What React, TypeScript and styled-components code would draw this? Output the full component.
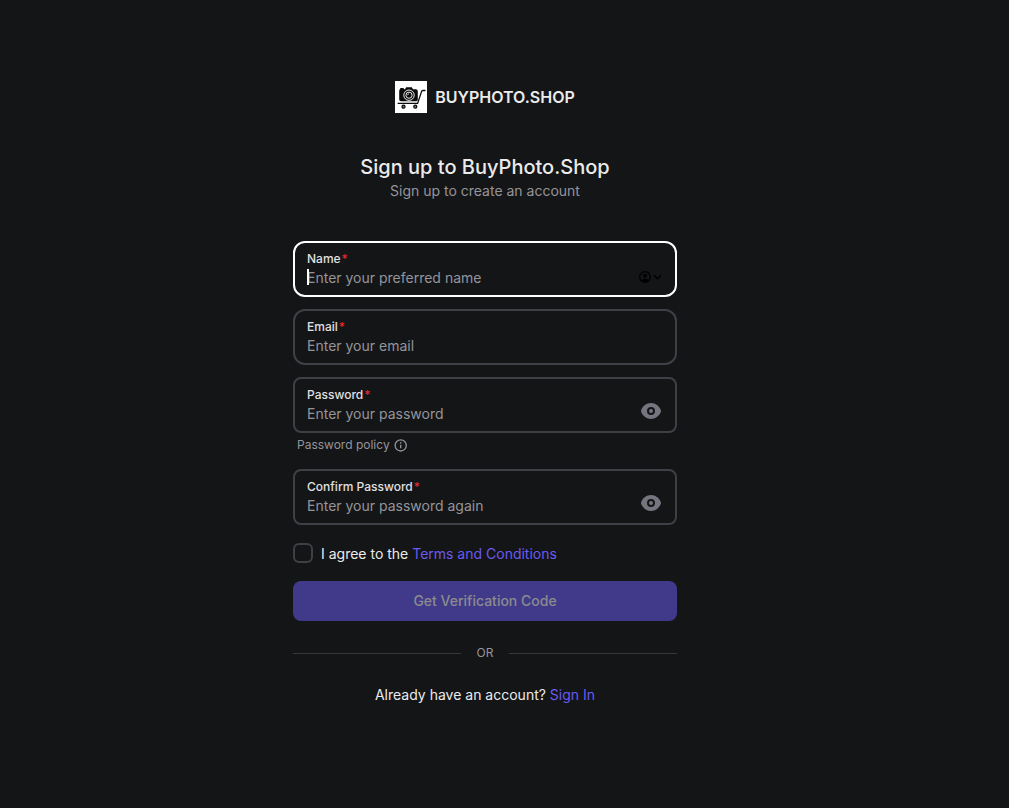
import React from "react";
import styled, { createGlobalStyle } from "styled-components";

const GlobalStyle = createGlobalStyle`
  *, *::before, *::after { box-sizing: border-box; }
  body {
    margin: 0;
    background: #141517;
    color: #ebebeb;
    font-family: Inter, "Liberation Sans", sans-serif;
    font-size: 14px;
    line-height: 20px;
  }
`;

const Page = styled.main`
  min-height: 100vh;
  display: flex;
  justify-content: center;
  padding: 81px 39px 80px 0;
`;

const Panel = styled.div`
  width: 100%;
  max-width: 384px;
  display: flex;
  flex-direction: column;
`;

const Brand = styled.div`
  display: flex;
  align-items: center;
  justify-content: center;
  gap: 8px;
  font-size: 16px;
  font-weight: 600;
`;

const Heading = styled.header`
  margin: 40px 0;
  text-align: center;
`;

const Title = styled.h1`
  margin: 0;
  font-size: 20px;
  line-height: 28px;
  font-weight: 500;
`;

const Subtitle = styled.p`
  margin: 0;
  color: #94949b;
`;

const Form = styled.form`
  display: flex;
  flex-direction: column;
`;

const Fields = styled.div`
  display: flex;
  flex-direction: column;
  gap: 12px;
`;

const FieldBox = styled.div<{ $active?: boolean; $radius: number }>`
  display: flex;
  align-items: flex-start;
  height: 56px;
  padding: 6px 12px;
  border: 2px solid ${(p) => (p.$active ? "#ffffff" : "#3f4046")};
  border-radius: ${(p) => p.$radius}px;
`;

const FieldText = styled.div`
  position: relative;
  flex: 1;
  min-width: 0;
`;

const Label = styled.label`
  display: block;
  font-size: 12px;
  line-height: 20px;
  font-weight: 500;
  color: #e0e0e2;
`;

const Star = styled.span`
  margin-left: 1px;
  color: #e5262d;
`;

const Input = styled.input`
  display: block;
  width: 100%;
  height: 18px;
  padding: 0;
  border: 0;
  outline: 0;
  background: transparent;
  color: #ebebeb;
  font: inherit;
  line-height: 18px;
  &::placeholder { color: #94949b; opacity: 1; }
`;

const Caret = styled.span`
  position: absolute;
  left: 0;
  bottom: 2px;
  width: 2px;
  height: 16px;
  background: #ffffff;
`;

const IconButton = styled.button`
  display: flex;
  align-self: flex-end;
  padding: 0 2px 6px;
  border: 0;
  background: none;
  color: #75757f;
`;

const Policy = styled.p`
  display: flex;
  align-items: center;
  gap: 4px;
  margin: 2px 4px 14px;
  font-size: 12px;
  color: #94949b;
`;

const Agree = styled.div`
  display: flex;
  align-items: center;
  gap: 8px;
  margin: 17px 0;
`;

const AgreeText = styled.span`
  padding-top: 2px;
`;

const Checkbox = styled.input`
  appearance: none;
  width: 20px;
  height: 20px;
  margin: 0;
  border: 2px solid #3f4046;
  border-radius: 6px;
`;

const Link = styled.a`
  color: #6a5af0;
  text-decoration: none;
`;

const Submit = styled.button`
  height: 40px;
  border: 0;
  border-radius: 8px;
  background: #413a8a;
  color: #8b8b8f;
  font: inherit;
  font-weight: 500;
`;

const Divider = styled.div`
  display: flex;
  align-items: center;
  gap: 16px;
  margin: 22px 0;
  font-size: 12px;
  color: #94949b;
  &::before, &::after {
    content: "";
    flex: 1;
    height: 1px;
    background: #36373b;
  }
`;

const Footer = styled.p`
  margin: 0;
  text-align: center;
`;

const Logo = () => (
  <svg width="32" height="32" viewBox="0 0 32 32" aria-hidden="true">
    <rect width="32" height="32" fill="#fff" />
    <path
      d="M5 8.2Q5 7 6 7H8Q9 7 9 8.2H10L11.2 6.3H16.8L18 8.2H20.8Q22.8 8.2 22.8 10.2V18.5Q22.8 20.2 21.3 20.2H6Q4.2 20.2 4.2 18.5V9.8Q4.2 8.5 5 8.2Z"
      fill="#0b0b0b"
    />
    <circle cx="14" cy="14.2" r="5.2" fill="none" stroke="#fff" strokeWidth="0.9" />
    <circle cx="14" cy="14.2" r="3.1" fill="none" stroke="#fff" strokeWidth="0.9" />
    <path d="M12.6 14.2A1.5 1.5 0 0 1 14 12.7" fill="none" stroke="#fff" strokeWidth="0.7" />
    <path d="M3.2 22.4H22.6L26.6 10.4Q26.9 9.5 28 9.5H30" fill="none" stroke="#0b0b0b" strokeWidth="1.3" strokeLinecap="round" />
    <circle cx="8.5" cy="25.7" r="1.5" fill="#777" stroke="#0b0b0b" strokeWidth="1.3" />
    <circle cx="20.3" cy="25.7" r="1.5" fill="#777" stroke="#0b0b0b" strokeWidth="1.3" />
  </svg>
);

const Eye = () => (
  <svg width="20" height="16" viewBox="0 0 20 16" aria-hidden="true">
    <path
      fillRule="evenodd"
      fill="currentColor"
      d="M10 0C5.6 0 2 2.8 0.3 6.7Q-0.2 8 0.3 9.3C2 13.2 5.6 16 10 16S18 13.2 19.7 9.3Q20.2 8 19.7 6.7C18 2.8 14.4 0 10 0ZM10 4A4 4 0 1 1 10 12A4 4 0 1 1 10 4ZM10 6A2 2 0 1 0 10 10A2 2 0 1 0 10 6Z"
    />
  </svg>
);

const Contact = () => (
  <svg width="22" height="12" viewBox="0 0 22 12" aria-hidden="true">
    <g fill="none" stroke="#000">
      <circle cx="6" cy="6" r="5.3" strokeWidth="1.2" />
      <path d="M15 4.3L18.5 7.7L22 4.3" strokeWidth="1.5" />
    </g>
    <circle cx="6" cy="4.7" r="2" fill="#000" />
    <path d="M2.4 9.2Q6 5.6 9.6 9.2Q6 12.4 2.4 9.2Z" fill="#000" />
  </svg>
);

const Info = () => (
  <svg width="14" height="14" viewBox="0 0 14 14" aria-hidden="true">
    <circle cx="6.7" cy="7.4" r="5.6" fill="none" stroke="currentColor" strokeWidth="1.3" />
    <path d="M6.7 6.7V10.2" stroke="currentColor" strokeWidth="1.3" />
    <circle cx="6.7" cy="4.9" r="0.8" fill="currentColor" />
  </svg>
);

type FieldProps = {
  id: string;
  label: string;
  placeholder: string;
  type?: string;
  active?: boolean;
  radius?: number;
  action?: { name: string; icon: React.ReactNode };
};

const Field = ({ id, label, placeholder, type = "text", active, radius = 12, action }: FieldProps) => (
  <FieldBox $active={active} $radius={radius}>
    <FieldText>
      <Label htmlFor={id}>
        {label}
        <Star>*</Star>
      </Label>
      <Input id={id} type={type} placeholder={placeholder} />
      {active && <Caret />}
    </FieldText>
    {action && (
      <IconButton type="button" aria-label={action.name}>
        {action.icon}
      </IconButton>
    )}
  </FieldBox>
);

export default function App() {
  return (
    <>
      <GlobalStyle />
      <Page>
        <Panel>
          <Brand>
            <Logo />
            BUYPHOTO.SHOP
          </Brand>
          <Heading>
            <Title>Sign up to BuyPhoto.Shop</Title>
            <Subtitle>Sign up to create an account</Subtitle>
          </Heading>
          <Form onSubmit={(e) => e.preventDefault()}>
            <Fields>
              <Field
                id="name"
                label="Name"
                placeholder="Enter your preferred name"
                active
                action={{ name: "Fill in from contacts", icon: <Contact /> }}
              />
              <Field id="email" label="Email" type="email" placeholder="Enter your email" />
              <Field
                id="password"
                label="Password"
                type="password"
                placeholder="Enter your password"
                radius={8}
                action={{ name: "Show password", icon: <Eye /> }}
              />
            </Fields>
            <Policy>
              Password policy <Info />
            </Policy>
            <Field
              id="confirm"
              label="Confirm Password"
              type="password"
              placeholder="Enter your password again"
              radius={8}
              action={{ name: "Show password", icon: <Eye /> }}
            />
            <Agree>
              <Checkbox id="agree" type="checkbox" />
              <AgreeText>
                <label htmlFor="agree">I agree to the</label> <Link href="#terms">Terms and Conditions</Link>
              </AgreeText>
            </Agree>
            <Submit type="submit" disabled>
              Get Verification Code
            </Submit>
          </Form>
          <Divider>OR</Divider>
          <Footer>
            Already have an account? <Link href="#signin">Sign In</Link>
          </Footer>
        </Panel>
      </Page>
    </>
  );
}
